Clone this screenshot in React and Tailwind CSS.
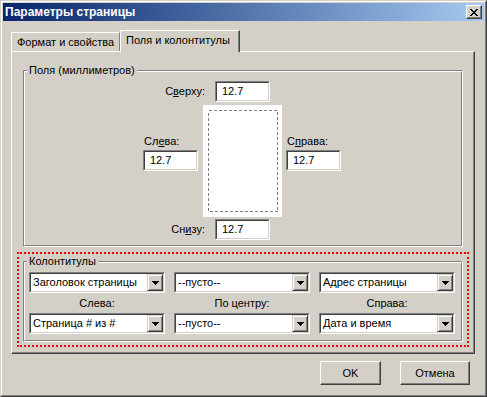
import React from "react";

function Field({ value }) {
  return (
    <div className="h-[21px] w-[55px] bg-white border border-t-[#808080] border-l-[#808080] border-r-white border-b-white">
      <div className="h-full flex items-center pl-[5px] border border-t-[#404040] border-l-[#404040] border-r-[#d4d0c8] border-b-[#d4d0c8]">
        {value}
      </div>
    </div>
  );
}

function Arrow() {
  return (
    <svg width="7" height="4" viewBox="0 0 7 4" shapeRendering="crispEdges">
      <path d="M0 0h7v1H0zM1 1h5v1H1zM2 2h3v1H2zM3 3h1v1H3z" fill="#000" />
    </svg>
  );
}

function Combo({ value }) {
  return (
    <div className="h-[21px] w-[136px] bg-white border border-t-[#808080] border-l-[#808080] border-r-white border-b-white">
      <div className="h-full flex items-center border border-t-[#404040] border-l-[#404040] border-r-[#d4d0c8] border-b-[#d4d0c8]">
        <span className="flex-1 pl-[2px] whitespace-nowrap overflow-hidden">{value}</span>
        <div className="w-[16px] h-full flex items-center justify-center bg-[#d4d0c8] border border-t-[#d4d0c8] border-l-[#d4d0c8] border-r-[#404040] border-b-[#404040] shadow-[inset_1px_1px_0_#ffffff,inset_-1px_-1px_0_#808080]">
          <Arrow />
        </div>
      </div>
    </div>
  );
}

function Group({ label, children, className = "" }) {
  return (
    <div className={"border border-t-[#808080] border-l-[#808080] border-r-white border-b-white " + className}>
      <div className="border border-t-white border-l-white border-r-[#808080] border-b-[#808080]">
        <div className="-mt-[8px] ml-[2px] w-fit px-[2px] bg-[#d4d0c8] leading-[13px]">{label}</div>
        {children}
      </div>
    </div>
  );
}

function Button({ children, className = "" }) {
  return (
    <div
      className={
        "h-[24px] flex items-center justify-center bg-[#d4d0c8] border border-t-white border-l-white border-r-[#404040] border-b-[#404040] shadow-[inset_-1px_-1px_0_#808080] " +
        className
      }
    >
      {children}
    </div>
  );
}

function CloseGlyph() {
  return (
    <svg width="8" height="7" viewBox="0 0 8 7" shapeRendering="crispEdges">
      <path
        d="M0 0h2v1H0zM6 0h2v1H6zM1 1h2v1H1zM5 1h2v1H5zM2 2h4v1H2zM3 3h2v1H3zM2 4h4v1H2zM1 5h2v1H1zM5 5h2v1H5zM0 6h2v1H0zM6 6h2v1H6z"
        fill="#000"
      />
    </svg>
  );
}

export default function App() {
  return (
    <div className="w-[487px] h-[397px] overflow-hidden bg-[#d4d0c8] border border-t-[#d4d0c8] border-l-[#d4d0c8] border-r-[#404040] border-b-[#404040] font-['Liberation_Sans',Arial,sans-serif] text-[11px] leading-[13px] text-black">
      <div className="h-full flex flex-col p-px border border-t-white border-l-white border-r-[#808080] border-b-[#808080]">
        {/* Title bar */}
        <div className="h-[18px] flex items-center justify-between pl-[2px] pr-[2px] bg-gradient-to-r from-[#0a246a] to-[#a6caf0]">
          <span className="font-bold text-[12px] text-white whitespace-nowrap">Параметры страницы</span>
          <div className="w-[16px] h-[14px] flex items-center justify-center bg-[#d4d0c8] border border-t-white border-l-white border-r-[#404040] border-b-[#404040] shadow-[inset_-1px_-1px_0_#808080]">
            <CloseGlyph />
          </div>
        </div>

        <div className="flex-1 flex flex-col pt-[9px] pl-[8px] pr-[9px]">
          {/* Tabs */}
          <div className="h-[21px] flex items-end">
            <div className="w-[109px] h-[19px] flex items-center pl-[5px] whitespace-nowrap border-t border-l border-r border-t-white border-l-white border-r-[#808080]">
              Формат и свойства
            </div>
            <div className="relative z-10 -mb-px w-[120px] h-[22px] flex items-center pl-[5px] pb-[2px] whitespace-nowrap bg-[#d4d0c8] border-t border-l border-r border-t-white border-l-white border-r-[#404040] shadow-[inset_-1px_0_0_#808080]">
              Поля и колонтитулы
            </div>
          </div>

          {/* Panel */}
          <div className="h-[303px] pt-[18px] px-[11px] border border-t-white border-l-white border-r-[#404040] border-b-[#404040] shadow-[inset_-1px_-1px_0_#808080]">
            <Group label="Поля (миллиметров)">
              <div className="pb-[5px]">
                <div className="mt-[4px] w-[245px] h-[21px] flex items-center justify-end gap-[10px]">
                  <span>
                    С<span className="underline">в</span>ерху:
                  </span>
                  <Field value="12.7" />
                </div>
                <div className="mt-[3px] pl-[118px] flex">
                  <div className="w-[55px] pt-[30px] flex flex-col">
                    <span className="pl-[1px] mb-[2px]">
                      Сл<span className="underline">е</span>ва:
                    </span>
                    <Field value="12.7" />
                  </div>
                  <div className="ml-[5px] w-[79px] h-[112px] bg-white pl-[5px] pt-[5px]">
                    <svg width="70" height="102" viewBox="0 0 70 102" shapeRendering="crispEdges">
                      <rect x="0.5" y="0.5" width="69" height="101" fill="none" stroke="#808080" strokeDasharray="3 2" />
                    </svg>
                  </div>
                  <div className="ml-[4px] w-[56px] pt-[30px] flex flex-col">
                    <span className="pl-[1px] mb-[2px]">
                      С<span className="underline">п</span>рава:
                    </span>
                    <Field value="12.7" />
                  </div>
                </div>
                <div className="mt-[2px] w-[245px] h-[21px] flex items-center justify-end gap-[10px]">
                  <span>
                    Сн<span className="underline">и</span>зу:
                  </span>
                  <Field value="12.7" />
                </div>
              </div>
            </Group>

            <div className="mt-[5px] -mx-[6px] border-2 border-dotted border-[#ff0000] pt-[7px] px-[4px] pb-[3px]">
              <Group label="Колонтитулы">
                <div className="mt-[4px] pl-[4px] pb-[6px] grid grid-cols-[136px_136px_136px] gap-x-[9px]">
                  <Combo value="Заголовок страницы" />
                  <Combo value="--пусто--" />
                  <Combo value="Адрес страницы" />
                  <div className="mt-[4px] mb-[3px] text-center">Слева:</div>
                  <div className="mt-[4px] mb-[3px] text-center">По центру:</div>
                  <div className="mt-[4px] mb-[3px] text-center">Справа:</div>
                  <Combo value="Страница # из #" />
                  <Combo value="--пусто--" />
                  <Combo value="Дата и время" />
                </div>
              </Group>
            </div>
          </div>

          {/* Buttons */}
          <div className="mt-[7px] pr-[5px] flex justify-end gap-[19px]">
            <Button className="w-[61px]">OK</Button>
            <Button className="w-[70px]">Отмена</Button>
          </div>
        </div>
      </div>
    </div>
  );
}
